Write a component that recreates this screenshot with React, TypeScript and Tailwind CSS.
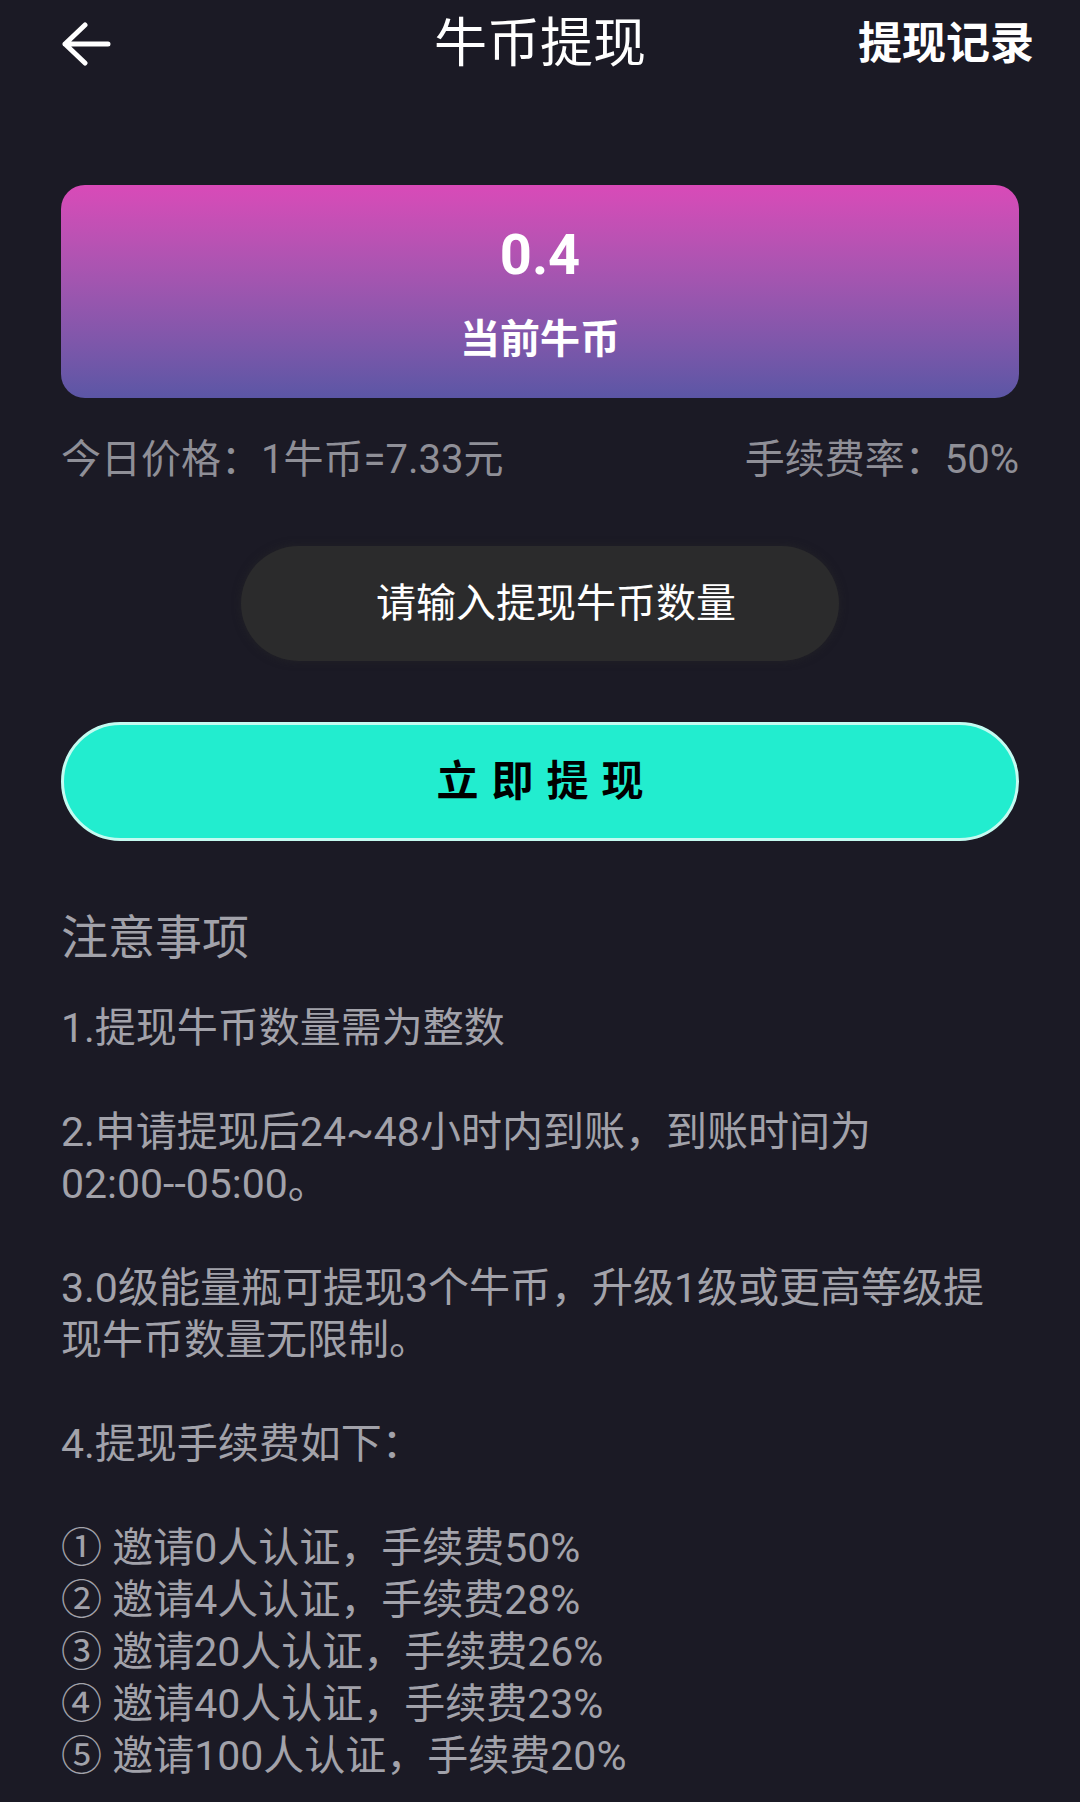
import React from "react";

const FONT = { fontFamily: 'Roboto, "Noto Sans CJK SC", sans-serif' };

function BackArrow() {
  return (
    <svg width="50" height="44" viewBox="0 0 50 44" fill="none">
      <path d="M24 3 L4 22 L24 41 M4 22 L47 22" stroke="white" strokeWidth="5" strokeLinecap="round" strokeLinejoin="round" />
    </svg>
  );
}

export default function App() {
  const fees = [
    "① 邀请0人认证，手续费50%",
    "② 邀请4人认证，手续费28%",
    "③ 邀请20人认证，手续费26%",
    "④ 邀请40人认证，手续费23%",
    "⑤ 邀请100人认证，手续费20%",
  ];
  return (
    <div className="min-h-[1802px] w-[1080px] bg-[#1b1a25] text-white overflow-hidden" style={FONT}>
      {/* Header */}
      <div className="grid grid-cols-[1fr_auto_1fr] items-center h-[88px] px-[46px]">
        <div className="flex items-center pl-[15px]">
          <BackArrow />
        </div>
        <div className="text-[53px] leading-none text-white">牛币提现</div>
        <div className="flex justify-end text-[44px] font-bold leading-none text-white">提现记录</div>
      </div>

      <div className="px-[61px]">
        {/* Card */}
        <div className="mt-[97px] h-[213px] rounded-[24px] bg-gradient-to-b from-[#d94ab8] to-[#5b56a5] flex flex-col items-center">
          <div className="mt-[42px] text-[56px] font-bold leading-none">0.4</div>
          <div className="mt-[37px] text-[40px] font-bold leading-none">当前牛币</div>
        </div>

        {/* Info row */}
        <div className="mt-[42px] flex justify-between items-center text-[40px] leading-[40px] text-[#8f8f97]">
          <span>今日价格：1牛币=7.33元</span>
          <span>手续费率：50%</span>
        </div>

        {/* Input pill */}
        <div className="mt-[66px] flex justify-center">
          <div className="w-[598px] h-[115px] rounded-full bg-[#2b2b2c] flex items-center justify-center pl-[32px] text-[40px] text-white shadow-[0_0_8px_rgba(40,40,40,0.6)]">
            请输入提现牛币数量
          </div>
        </div>

        {/* Button */}
        <div className="mt-[61px] h-[119px] rounded-full bg-[#22edcf] border-[3px] border-[#c4fbf1] flex items-center justify-center">
          <span className="text-[42px] font-bold text-black tracking-[13px] pl-[13px] leading-none">立即提现</span>
        </div>

        {/* Notes */}
        <div className="mt-[71px] text-[47px] leading-[52px] text-[#a2a2aa]">注意事项</div>
        <div className="mt-[38px] text-[41px] leading-[52px] text-[#a2a2aa] whitespace-nowrap">
          <div>1.提现牛币数量需为整数</div>
          <div className="h-[52px]" />
          <div>2.申请提现后24~48小时内到账，到账时间为</div>
          <div>02:00--05:00。</div>
          <div className="h-[52px]" />
          <div>3.0级能量瓶可提现3个牛币，升级1级或更高等级提</div>
          <div>现牛币数量无限制。</div>
          <div className="h-[52px]" />
          <div>4.提现手续费如下：</div>
          <div className="h-[52px]" />
          {fees.map((f) => (
            <div key={f}>{f}</div>
          ))}
        </div>
      </div>
    </div>
  );
}
